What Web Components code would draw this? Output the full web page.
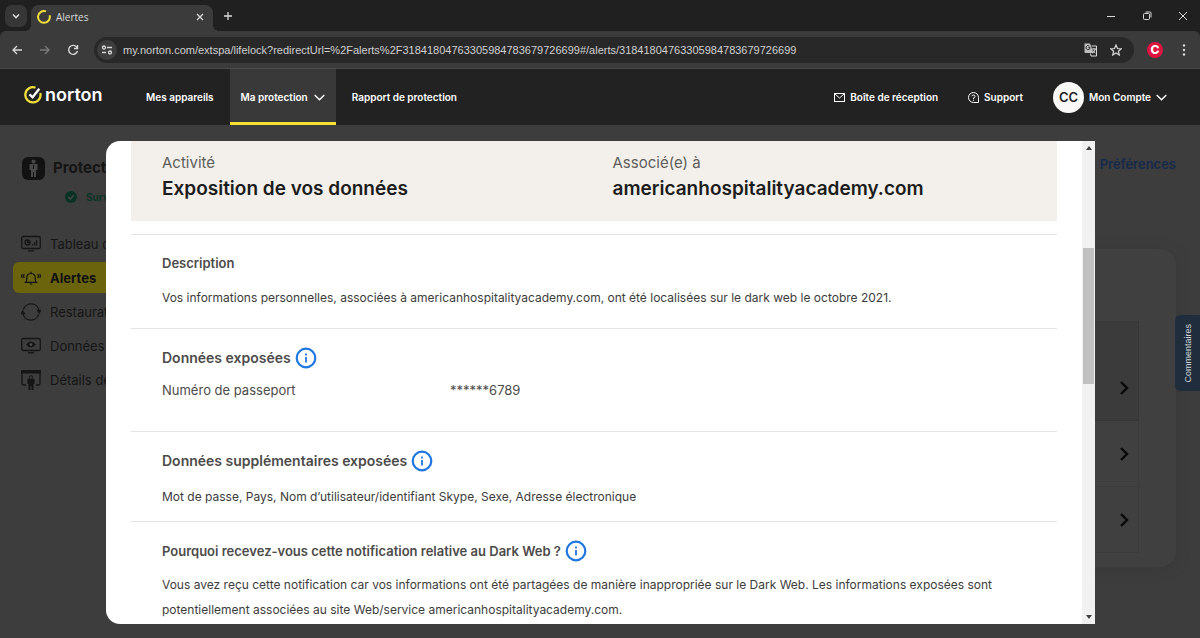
<!DOCTYPE html>
<html lang="fr">
<head>
<meta charset="utf-8">
<title>Alertes</title>
<style>
html, body { margin: 0; height: 100%; }
body { display: flex; flex-direction: column; overflow: hidden; background: #3d3d3d; font-family: Inter, "Liberation Sans", sans-serif; }
</style>
</head>
<body>
<browser-chrome></browser-chrome>
<site-header></site-header>
<alerts-page>
  <alert-dialog slot="dialog">
    <detail-section heading="Description" size="small">
      <p>Vos informations personnelles, associées à americanhospitalityacademy.com, ont été localisées sur le dark web le octobre 2021.</p>
    </detail-section>
    <detail-section heading="Données exposées" info class="rows">
      <exposed-row label="Numéro de passeport">******6789</exposed-row>
    </detail-section>
    <detail-section heading="Données supplémentaires exposées" info class="tight">
      <p>Mot de passe, Pays, Nom d’utilisateur/identifiant Skype, Sexe, Adresse électronique</p>
    </detail-section>
    <detail-section heading="Pourquoi recevez-vous cette notification relative au Dark Web ?" size="small" info class="rows">
      <p>Vous avez reçu cette notification car vos informations ont été partagées de manière inappropriée sur le Dark Web. Les informations exposées sont potentiellement associées au site Web/service americanhospitalityacademy.com.</p>
    </detail-section>
  </alert-dialog>
</alerts-page>
<script>
const RESET = `
  *, *::before, *::after { box-sizing: border-box; }
  button { font: inherit; color: inherit; background: none; border: 0; padding: 0; display: inline-flex; align-items: center; justify-content: center; }
  a { color: inherit; text-decoration: none; }
  svg { display: block; flex: none; fill: none; stroke: currentColor; }
  h1, h2, h3, p, ul, dl, dd, dt { margin: 0; padding: 0; }
  ul { list-style: none; }
`;
function define(name, template) {
  customElements.define(name, class extends HTMLElement {
    constructor() {
      super();
      const html = typeof template === 'function' ? template(this) : template;
      this.attachShadow({ mode: 'open' }).innerHTML = `<style>${RESET}</style>` + html;
    }
  });
}

define('browser-chrome', `
<style>
  :host { display: block; flex: none; background: #202020; color: #d8d8d8; font-family: "Liberation Sans", sans-serif; }
  .strip { display: flex; align-items: flex-end; height: 31px; padding: 0 8px 0 5px; }
  .search { width: 22px; height: 22px; border-radius: 7px; background: #363636; margin-bottom: 4px; }
  .tab { position: relative; display: flex; align-items: center; width: 182px; height: 26px; margin-left: 4px; padding: 0 7px 3px 6px; gap: 5px; background: #3b3b3b; border-radius: 8px 8px 0 0; font: 10px "Open Sans", sans-serif; }
  .tab svg.norton { stroke: #f2e03a; }
  .tab::before, .tab::after { content: ""; position: absolute; bottom: 0; width: 6px; height: 6px; }
  .tab::before { left: -6px; background: radial-gradient(circle at 0 0, transparent 6px, #3b3b3b 6px); }
  .tab::after { right: -6px; background: radial-gradient(circle at 100% 0, transparent 6px, #3b3b3b 6px); }
  .tab span { flex: 1; }
  .new { width: 30px; height: 31px; }
  .window { display: flex; margin-left: auto; height: 31px; gap: 22px; padding-right: 2px; }
  .window button { width: 14px; }
  .bar { display: flex; align-items: center; height: 38px; padding: 0 10px; background: #3b3b3b; border-bottom: 1px solid #4a4a4a; border-radius: 6px 6px 0 0; }
  .bar > button { width: 14px; height: 20px; margin-right: 14px; }
  .bar > button.dim { color: #797979; }
  .address { flex: 1; display: flex; align-items: center; height: 26px; padding: 0 12px 0 3px; border-radius: 13px; background: #282828; }
  .site { width: 20px; height: 20px; border-radius: 10px; background: #3d3d3d; }
  input { flex: 1; min-width: 0; border: 0; padding: 0; margin-left: 6px; background: none; color: #d0d0d0; font: 11px/20px "Liberation Sans", sans-serif; outline: 0; }
  .address .star { margin-left: 12px; }
  .bar > .profile { width: 16px; height: 16px; border-radius: 8px; background: #dc1440; color: #fff; font: 800 12px/16px Inter, sans-serif; margin: 0 19px 0 13px; }
  .bar > .more { width: 4px; margin: 0 4px 0 0; }
</style>
<div class="strip">
  <button class="search" aria-label="Rechercher dans les onglets"><svg width="8" height="6" stroke-width="1.6"><path d="M1 1.5 4 4.5 7 1.5"/></svg></button>
  <div class="tab">
    <svg class="norton" width="14" height="14" viewBox="0 0 14 14" stroke-width="2"><path d="M9 1.400A5.900 5.900 0 1 0 12.600 5.300"/></svg>
    <span>Alertes</span>
    <button aria-label="Fermer l’onglet"><svg width="12" height="12" stroke-width="1.3"><path d="M3 3 9 9M9 3 3 9"/></svg></button>
  </div>
  <button class="new" aria-label="Nouvel onglet"><svg width="10" height="10" stroke-width="1.3"><path d="M5 1v8M1 5h8"/></svg></button>
  <div class="window">
    <button aria-label="Réduire"><svg width="10" height="10"><path d="M1 5.500h8"/></svg></button>
    <button aria-label="Restaurer"><svg width="10" height="10"><rect x="1.500" y="2.500" width="6" height="6" rx="1"/><path d="M3.500 1h4.500q1 0 1 1v4.500"/></svg></button>
    <button aria-label="Fermer"><svg width="10" height="10"><path d="M1 1 9 9M9 1 1 9"/></svg></button>
  </div>
</div>
<div class="bar">
  <button aria-label="Précédent"><svg width="12" height="12" stroke-width="1.3"><path d="M11 6H2M6 2 2 6 6 10"/></svg></button>
  <button class="dim" aria-label="Suivant"><svg width="12" height="12" stroke-width="1.3"><path d="M1 6H10M6 2 10 6 6 10"/></svg></button>
  <button aria-label="Actualiser"><svg width="12" height="12" stroke-width="1.4"><path d="M10 3.500A4.500 4.500 0 1 0 10.500 7M10.500 1v3.500H7"/></svg></button>
  <div class="address">
    <button class="site" aria-label="Informations sur le site"><svg width="12" height="12" stroke-width="1.3"><circle cx="3" cy="3.500" r="1.500"/><path d="M6 3.500h5M1 8.500h4"/><circle cx="9" cy="8.500" r="1.500"/></svg></button>
    <input aria-label="Adresse" value="my.norton.com/extspa/lifelock?redirectUrl=%2Falerts%2F31841804763305984783679726699#/alerts/31841804763305984783679726699">
    <button aria-label="Traduire"><svg width="14" height="14"><path d="M.500.500H6L9.500 10H1.500q-1 0-1-1z" fill="#bdbdbd" stroke="none"/><path d="M6.200 4.600H4.300M6 4.800A2 2 0 1 1 5.400 3.200" stroke="#333"/><path d="M7.500 3H12.500V13H7L6.500 10.500M8 6h4M10 5v1M11.300 6Q11 8.500 8.500 10M9 7.500 11.300 10.300"/></svg></button>
    <button class="star" aria-label="Ajouter aux favoris"><svg width="12" height="12" viewBox="0 0 12 12" stroke-width="1.200"><path d="M6 1 7.500 4.500 11.300 4.800 8.400 7.300 9.300 11 6 9 2.700 11 3.600 7.300.7 4.800 4.500 4.500z"/></svg></button>
  </div>
  <button class="profile" aria-label="Profil">C</button>
  <button class="more" aria-label="Menu"><svg width="4" height="12"><g fill="#d8d8d8" stroke="none"><circle cx="2" cy="1.500" r="1.200"/><circle cx="2" cy="6" r="1.200"/><circle cx="2" cy="10.500" r="1.200"/></g></svg></button>
</div>`);

define('site-header', `
<style>
  :host { display: flex; align-items: stretch; flex: none; height: 56px; padding: 0 33px 0 24px; background: #222; color: #fff; font-size: 10px; font-weight: 600; }
  .logo { display: flex; align-items: center; gap: 3px; width: 111px; padding-bottom: 4px; font: 600 18px/20px Inter, sans-serif; }
  nav { display: flex; gap: 5px; }
  nav a, .right a { display: flex; align-items: center; gap: 6px; padding: 0 11px; }
  nav a.on { background: #393939; border-bottom: 3px solid #f5e136; padding-top: 3px; }
  .right { display: flex; margin-left: auto; gap: 30px; }
  .right a { padding: 0; gap: 5px; }
  .avatar { display: flex; align-items: center; justify-content: center; width: 31px; height: 31px; border-radius: 16px; background: #faf9f7; color: #222; font-size: 13px; }
</style>
<a class="logo" href="#accueil"><svg width="18" height="18" viewBox="0 0 18 18" stroke-width="2.300"><path d="M11.500 1.700A7.600 7.600 0 1 0 16.300 7" style="stroke:#f2e03a"/><path d="M5.500 8.300 8.600 11.300 15.300 2.800" stroke="#fff"/></svg><span>norton</span></a>
<nav>
  <a href="#appareils">Mes appareils</a>
  <a class="on" href="#protection">Ma protection <svg width="11" height="7" stroke-width="1.400"><path d="M.700 1 5.500 5.800 10.300 1"/></svg></a>
  <a href="#rapport">Rapport de protection</a>
</nav>
<div class="right">
  <a href="#boite"><svg width="11" height="9"><rect x=".500" y=".500" width="10" height="8"/><path d="M1 1 5.500 5 10 1"/></svg>Boîte de réception</a>
  <a href="#support"><svg width="11" height="11"><path d="M10.500 5.500V10.500H5.500A5 5 0 1 1 10.500 5.500zM4 4.200A1.500 1.500 0 1 1 5.500 6V7M5.500 7.800v1"/></svg>Support</a>
  <a href="#compte"><span class="avatar">CC</span>Mon Compte <svg width="11" height="7" stroke-width="1.400"><path d="M.700 1 5.500 5.800 10.300 1"/></svg></a>
</div>`);

define('side-menu', `
<style>
  :host { display: block; flex: none; width: 220px; padding: 31px 0 0 13px; color: #151515; }
  .brand { display: flex; align-items: center; gap: 8px; padding-left: 9px; height: 24px; }
  h1 { font-size: 15px; line-height: 24px; font-weight: 700; }
  .status { display: flex; align-items: center; gap: 9px; height: 16px; margin: 9px 0 23px 52px; font-size: 10px; font-weight: 700; color: #083324; }
  li a { display: flex; align-items: center; gap: 9px; height: 31px; margin-bottom: 3px; padding-left: 8px; border-radius: 6px; font-size: 13px; white-space: nowrap; }
  li a.on { background: #6b640c; font-weight: 700; color: #111; }
</style>
<div class="brand">
  <svg width="23" height="23" viewBox="0 0 23 23"><rect width="23" height="23" rx="6" fill="#121212" stroke="none"/><g fill="#484848" stroke="none"><circle cx="11.500" cy="4.500" r="2"/><path d="M7.500 7h8v6h-1.500v7h-2v-5h-1v5h-2v-7H7.500z"/></g><path d="M11.500 8v4" stroke="#121212"/></svg>
  <h1>Protection</h1>
</div>
<div class="status"><svg width="12" height="12"><circle cx="6" cy="6" r="6" fill="#083324" stroke="none"/><path d="M3.200 6 5.300 8 8.800 4.300" stroke="#484848" stroke-width="1.300"/></svg>Surveillance</div>
<ul>
  <li><a href="#tableau"><svg width="20" height="17"><rect x=".700" y="1.500" width="18.600" height="12" rx="1.500" stroke-width="1.300"/><circle cx="6.500" cy="7.500" r="2.500" stroke-width="1.300"/><path d="M6.500 5v2.500H9M11.500 10.500V9M13.500 10.500V7.500M15.500 10.500V5M7 15.800h6" stroke-width="1.300"/></svg>Tableau de bord</a></li>
  <li><a class="on" href="#alertes"><svg width="20" height="16" stroke-width="1.200"><path d="M4.500 12.300h11Q14.200 11 14.200 9V7.500Q14.200 3.500 10 3.500T5.800 7.500V9Q5.800 11 4.500 12.300zM8.700 14h2.600M10 1.800v1.700M3.300 4Q1.800 6 3.300 8M1.300 4Q0 6 1.300 8M16.700 4Q18.200 6 16.700 8M18.700 4Q20 6 18.700 8"/></svg>Alertes</a></li>
  <li><a href="#restauration"><svg width="20" height="20" stroke-width="1.300"><path d="M2.300 7.500A8.200 8.200 0 0 1 18.200 9M17.700 12.500A8.200 8.200 0 0 1 1.800 11"/><path d="M16.500 8.500h3L18.300 11zM.500 11.500h3L1.700 9z" fill="currentColor"/></svg>Restauration</a></li>
  <li><a href="#donnees"><svg width="20" height="17"><rect x=".700" y="1.500" width="18.600" height="12" rx="1.500" stroke-width="1.300"/><path d="M5.500 7.500Q10 2.500 14.500 7.500 10 12.500 5.500 7.500z" fill="currentColor"/><circle cx="10" cy="7.500" r="1.300" fill="#555" stroke="none"/><path d="M7 15.800h6" stroke-width="1.300"/></svg>Données surveillées</a></li>
  <li><a href="#details"><svg width="20" height="20"><path d="M5 15H2.500Q1 15 1 13.500V2h18v11.500q0 1.500-1.500 1.500H15" stroke-width="1.300"/><path d="M0 0h20v3.500H0z" fill="currentColor" stroke="none"/><circle cx="10" cy="7.500" r="1.800"/><path d="M6.500 9h7v5H12.500v6h-2v-4h-1v4h-2v-6H6.500z" fill="currentColor" stroke="none"/></svg>Détails de l’abonnement</a></li>
</ul>`);

define('alert-list', `
<style>
  :host { display: block; margin-right: 24px; padding: 72px 37px 14px; border-radius: 16px; background: #404041; box-shadow: 0 2px 12px #3a3938; }
  li { display: flex; align-items: center; justify-content: flex-end; height: 66px; padding-right: 8px; border: 1px solid #3b3b3b; border-top: 0; color: #090909; }
  li:first-child { height: 100px; padding-top: 34px; background: #3b3b3b; border-color: #363636; }
  button { width: 12px; height: 20px; }
</style>
<ul>${'<li><button aria-label="Ouvrir l’alerte"><svg width="10" height="14" stroke-width="2.400"><path d="M2 1 8 7 2 13"/></svg></button></li>'.repeat(3)}</ul>`);

define('alerts-page', `
<style>
  :host { display: flex; flex: 1; min-height: 0; position: relative; overflow: hidden; background: #3d3d3d; }
  main { flex: 1; display: flex; flex-direction: column; }
  .prefs { align-self: flex-end; margin: 29px 24px 75px 0; font-size: 13px; line-height: 20px; font-weight: 600; color: #16294a; }
  ::slotted(alert-dialog) { position: absolute; inset: 16px 105px 14px 106px; }
  .feedback { position: absolute; right: 0; top: 190px; width: 25px; height: 76px; border-radius: 5px 0 0 5px; background: #202d3c; color: #d5d8dc; font: 9px/12px "Liberation Sans", sans-serif; }
  .feedback span { writing-mode: vertical-rl; transform: rotate(180deg); }
</style>
<side-menu></side-menu>
<main>
  <a class="prefs" href="#preferences">Préférences</a>
  <alert-list></alert-list>
</main>
<slot name="dialog"></slot>
<button class="feedback"><span>Commentaires</span></button>`);

define('scroll-rail', `
<style>
  :host { display: flex; flex-direction: column; flex: none; width: 13px; background: #f1f1f1; }
  button { height: 14px; }
  .before { flex: 93; } .thumb { flex: 136; margin: 0 1px; background: #c1c1c1; } .after { flex: 226; }
</style>
<button aria-label="Défiler vers le haut"><svg width="6" height="4"><path d="M0 4 3 0 6 4z" fill="#404040" stroke="none"/></svg></button>
<div class="before"></div><div class="thumb"></div><div class="after"></div>
<button aria-label="Défiler vers le bas"><svg width="6" height="4"><path d="M0 0 3 4 6 0z" fill="#404040" stroke="none"/></svg></button>`);

define('alert-dialog', `
<style>
  :host { display: flex; overflow: hidden; border-radius: 14px 0 0 14px; background: #fff; color: #3c3c3a; }
  article { flex: 1; min-width: 0; overflow: hidden; padding: 0 25px; }
  dl { display: grid; grid-template-columns: 1fr 1fr; gap: 6px; height: 80px; margin-bottom: 13px; padding: 10px 0 0 31px; background: #f3f0eb; }
  dt { font-size: 15px; line-height: 24px; color: #5e5d5b; }
  dd { font-size: 19px; line-height: 28px; font-weight: 600; color: #1c1c1c; }
</style>
<article role="dialog" aria-label="Détails de l’alerte">
  <dl>
    <div><dt>Activité</dt><dd>Exposition de vos données</dd></div>
    <div><dt>Associé(e) à</dt><dd>americanhospitalityacademy.com</dd></div>
  </dl>
  <slot></slot>
</article>
<scroll-rail></scroll-rail>`);

define('detail-section', el => `
<style>
  :host { display: block; border-top: 1px solid #e4e4e4; padding: 18px 16px 18px 31px; font-size: 13px; line-height: 25px; }
  :host(.rows) { padding-bottom: 30px; --gap: 10px; }
  :host(.tight) { padding-bottom: 12px; }
  header { display: flex; align-items: center; gap: 4px; margin-bottom: var(--gap, 12px); color: #4c4b49; }
  h2 { font-size: 14px; line-height: 22px; font-weight: 600; }
  :host([size=small]) h2 { font-size: 13px; line-height: 20px; }
  button { color: #1f76e0; }
  ::slotted(p) { margin: 0; font-size: 12px; }
</style>
<header><h2>${el.getAttribute('heading')}</h2>${el.hasAttribute('info') ? '<button aria-label="En savoir plus"><svg width="22" height="22"><circle cx="11" cy="11" r="9.300" stroke-width="2.200"/><path d="M11 10v5.500M11 6.500v2" stroke-width="1.800"/></svg></button>' : ''}</header>
<slot></slot>`);

define('exposed-row', el => `
<style>
  :host { display: grid; grid-template-columns: 288px 1fr; line-height: 22px; color: #4c4b49; }
</style>
<span>${el.getAttribute('label')}</span><slot></slot>`);
</script>
</body>
</html>
